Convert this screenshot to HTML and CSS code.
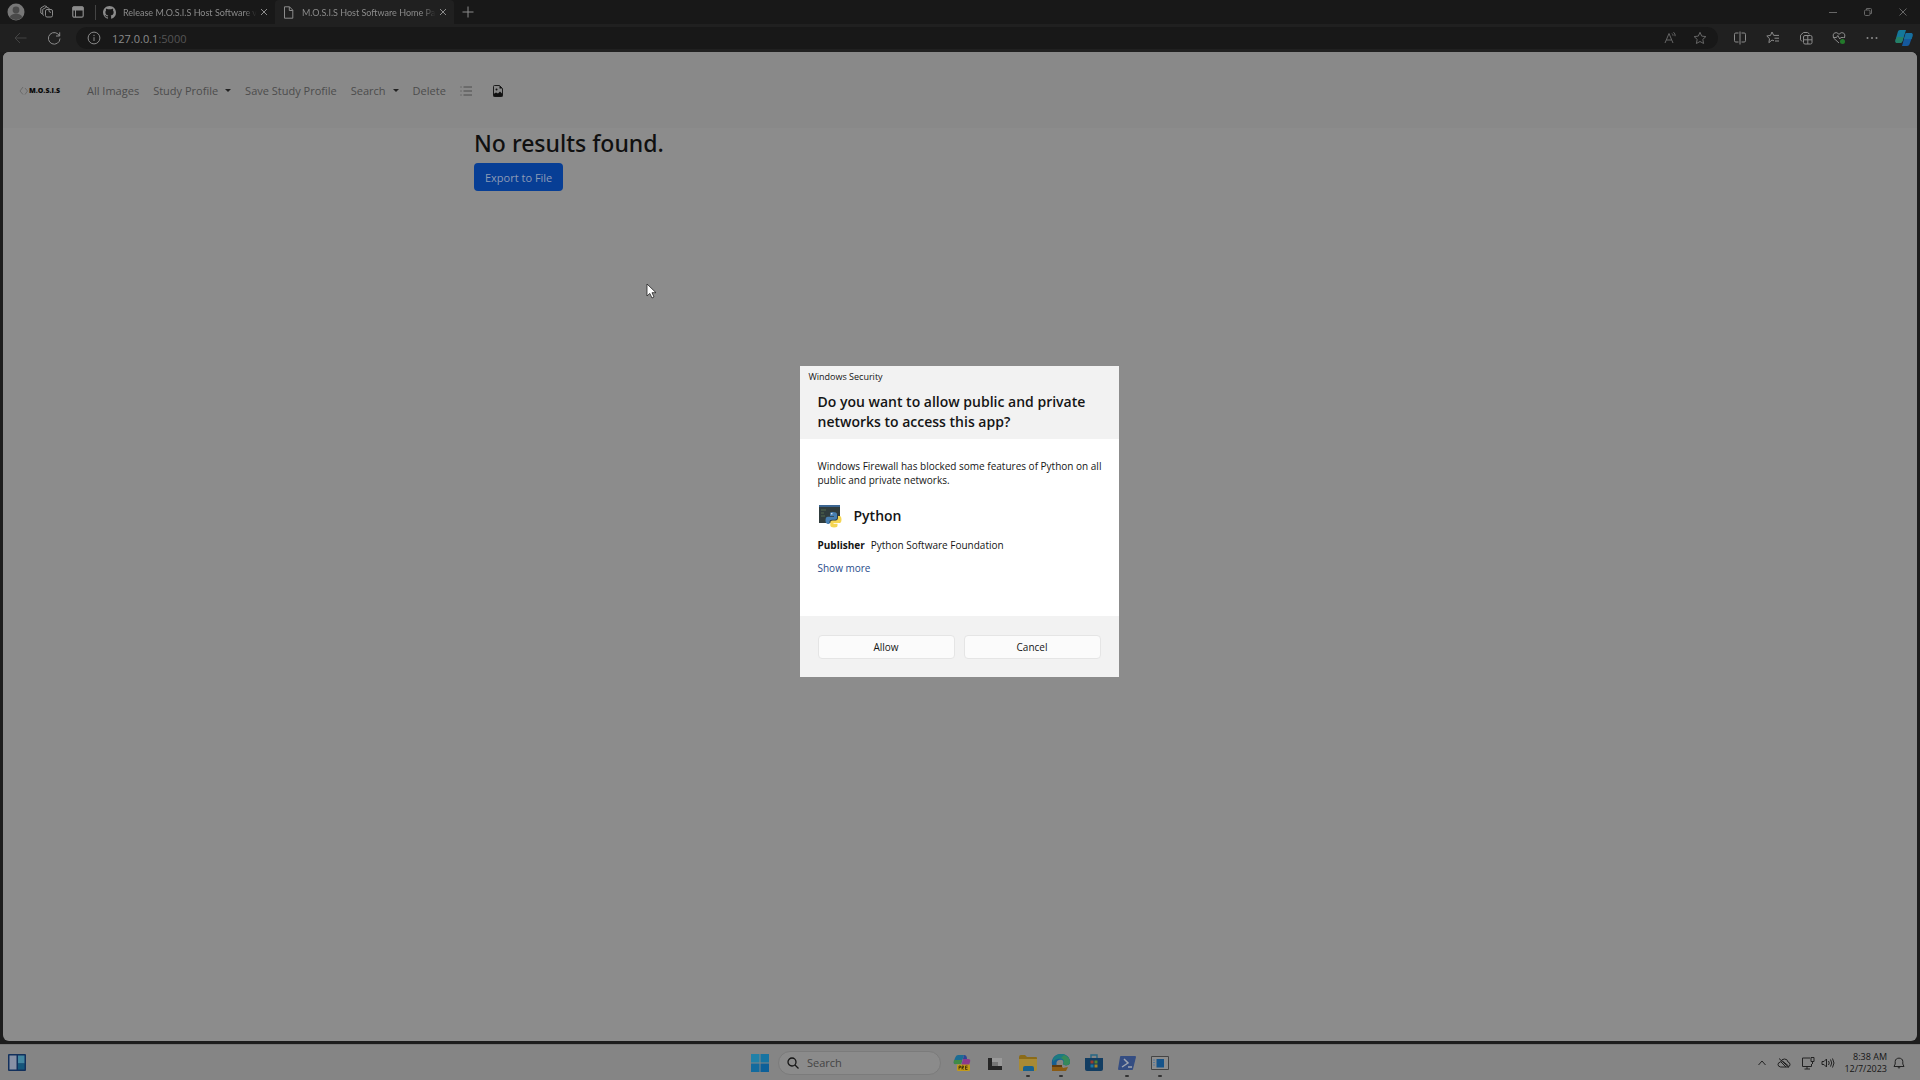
FILE: index.html
```html
<!DOCTYPE html>
<html lang="en">
<head>
<meta charset="utf-8">
<title>M.O.S.I.S Host Software Home Page</title>
<link rel="stylesheet" href="styles.css">
</head>
<body>
<div class="desktop">
  <section class="browser">
    <header class="tabstrip">
      <button class="icon-btn tab-tool" aria-label="Profile"><svg width="18" height="18" viewBox="0 0 18 18"><circle cx="9" cy="9" r="8.5" fill="#777"/><circle cx="9" cy="7" r="3.4" fill="#4a4a4a"/><path d="M3 14.5c0-5 12-5 12 0a8.500 8.500 0 0 1-12 0z" fill="#4a4a4a"/></svg></button>
      <button class="icon-btn tab-tool" aria-label="Workspaces"><svg class="line" width="14" height="14" viewBox="0 0 14 14"><rect x="5.500" y="4.500" width="7" height="7.500" rx="1.500"/><path d="M4 10.500 2.700 9.500V4.300L6.500 2.200l3 1.300M2.500 9 .8 8V3L4.500.8 7 1.600M9 4.500v2l2 1"/></svg></button>
      <button class="icon-btn tab-tool" aria-label="Tab actions"><svg width="12" height="12" viewBox="0 0 12 12"><rect x=".8" y=".8" width="10.400" height="10.400" rx="1.500" fill="none" stroke="#8b8b8b" stroke-width="1.200"/><path d="M1 1h10v3H1zM3.500 4v7" fill="#8b8b8b" stroke="#8b8b8b"/></svg></button>
      <span class="divider"></span>
      <div class="tab">
        <svg width="13" height="13" viewBox="0 0 16 16" fill="#8b8b8b"><path d="M8 0C3.580 0 0 3.580 0 8c0 3.540 2.290 6.530 5.470 7.590.4.070.55-.17.55-.38 0-.19-.01-.82-.01-1.490-2.010.37-2.530-.49-2.690-.94-.09-.23-.48-.94-.82-1.130-.28-.15-.68-.52-.01-.53.63-.01 1.080.58 1.230.82.72 1.210 1.870.87 2.330.66.070-.52.28-.87.51-1.070-1.780-.2-3.640-.89-3.640-3.950 0-.87.31-1.590.82-2.150-.08-.2-.36-1.020.08-2.120 0 0 .67-.21 2.200.82a7.600 7.600 0 0 1 4 0c1.530-1.040 2.200-.82 2.200-.82.44 1.100.16 1.920.08 2.120.51.56.82 1.270.82 2.150 0 3.070-1.870 3.750-3.650 3.950.29.25.54.73.54 1.480 0 1.070-.01 1.930-.01 2.200 0 .21.15.46.55.38A8 8 0 0 0 16 8c0-4.420-3.580-8-8-8z"/></svg>
        <a class="tab-title" href="#">Release M.O.S.I.S Host Software v</a>
        <button class="icon-btn close" aria-label="Close tab"><svg class="line" width="8" height="8" viewBox="0 0 8 8"><path d="m1 1 6 6M7 1 1 7"/></svg></button>
      </div>
      <div class="tab active">
        <svg class="line" width="13" height="13" viewBox="0 0 13 13"><path d="M2.500.8h5l3.300 3.400v8H2.500zM7.300.8v3.700h3.500"/></svg>
        <a class="tab-title" href="#">M.O.S.I.S Host Software Home Pa</a>
        <button class="icon-btn close" aria-label="Close tab"><svg class="line" width="8" height="8" viewBox="0 0 8 8"><path d="m1 1 6 6M7 1 1 7"/></svg></button>
      </div>
      <button class="icon-btn new-tab" aria-label="New tab"><svg class="line" width="12" height="12" viewBox="0 0 12 12"><path d="M6 .5v11M.5 6h11"/></svg></button>
      <div class="window-controls">
        <button class="icon-btn" aria-label="Minimize"><svg class="line dim" width="10" height="10" viewBox="0 0 10 10"><path d="M1 5.500h8"/></svg></button>
        <button class="icon-btn" aria-label="Restore"><svg class="line dim" width="10" height="10" viewBox="0 0 10 10"><rect x="1.500" y="3" width="5.500" height="5.500" rx="1.200"/><path d="M3.500 3V1.500h4a1 1 0 0 1 1 1v4H7"/></svg></button>
        <button class="icon-btn" aria-label="Close"><svg class="line dim" width="10" height="10" viewBox="0 0 10 10"><path d="m1.500 1.500 7 7m0-7-7 7"/></svg></button>
      </div>
    </header>
    <div class="toolbar">
      <button class="icon-btn" aria-label="Back"><svg class="line faint" width="13" height="12" viewBox="0 0 13 12"><path d="M12.500 6H1m5-5L1 6l5 5"/></svg></button>
      <button class="icon-btn" aria-label="Refresh"><svg class="line" width="14" height="14" viewBox="0 0 14 14"><path d="M12.500 5A5.800 5.800 0 1 0 13 7.500M12.700 1.300V5H9"/></svg></button>
      <div class="address">
        <svg class="line" width="14" height="14" viewBox="0 0 14 14"><circle cx="7" cy="7" r="5.900"/><path d="M7 6.200V10M7 3.800v1.300"/></svg>
        <a class="url" href="#"><b>127.0.0.1</b>:5000</a>
        <button class="icon-btn" aria-label="Read aloud"><svg class="line dim" width="14" height="14" viewBox="0 0 14 14"><path d="M2 12 6 2.500 10 12M3.300 9h5.400M9 2.500q1 .8 1 2.200M10.500 1.200q2 1.500 1.600 4"/></svg></button>
        <button class="icon-btn" aria-label="Favorite"><svg class="line dim" width="14" height="14" viewBox="0 0 14 14"><path d="m7 1.300 1.700 3.800 4.200.5-3.100 2.800.8 4.100L7 10.500l-3.600 2 .8-4.100L1.100 5.600l4.200-.5z"/></svg></button>
      </div>
      <div class="tools">
        <button class="icon-btn" aria-label="Split screen"><svg class="line" width="14" height="14" viewBox="0 0 14 14"><path d="M5.500 2H2.800Q1.500 2 1.500 3.300v6.400Q1.500 11 2.800 11h2.700M8.500 2h2.700q1.300 0 1.300 1.300v6.400q0 1.300-1.300 1.300H8.500M7 .5v13"/></svg></button>
        <button class="icon-btn" aria-label="Favorites list"><svg class="line" width="14" height="14" viewBox="0 0 14 14"><path d="M8 9.800 6 9l-3.100 2.700.6-4L.8 5l3.700-.6L6 1l1.700 3.400H13M8.500 7.200H13M9 10h4"/></svg></button>
        <button class="icon-btn" aria-label="Collections"><svg class="line" width="14" height="14" viewBox="0 0 14 14"><rect x="4.500" y="4.500" width="8.500" height="8.500" rx="1.500"/><path d="M8.800 5v8M4.500 8.800H13M3 10.500 1.500 8.800V4.200L4.500 1.500h4L10.500 3"/></svg></button>
        <button class="icon-btn" aria-label="Browser essentials"><svg class="line" width="14" height="14" viewBox="0 0 14 14"><path d="M7 12 1.500 7Q.3 3.300 2.500 1.900 5 .8 7 3.300q2-2.500 4.500-1.400 2.200 1.400 1 5.100M1.500 6.500h3l1.300-2 2 3.500 1-1.500h3"/><circle cx="10.500" cy="10.500" r="2.500" fill="#237a2b" stroke="none"/></svg></button>
        <button class="icon-btn" aria-label="More"><svg width="14" height="14" viewBox="0 0 14 14" fill="#8b8b8b"><circle cx="2.500" cy="7" r="1"/><circle cx="7" cy="7" r="1"/><circle cx="11.500" cy="7" r="1"/></svg></button>
        <button class="icon-btn" aria-label="Copilot"><svg width="18" height="18" viewBox="0 0 18 18"><path d="M5 1h6L7.500 12Q7 14 5 14H2Q0 14 .5 11L2.500 4Q3 1 5 1z" fill="#14789a"/><path d="M2 8 .5 11Q0 14 2 14h3q2 0 2.500-2l1-4z" fill="#258066"/><path d="M11 4h5q2 0 1.500 3L15 14q-.7 3-3 3H7l3-11q.3-2 1-2z" fill="#15589b"/><path d="M11 4h5q2 0 1.500 3l-.8 3H9z" fill="#176f9e"/></svg></button>
      </div>
    </div>
    <main class="page">
      <nav class="navbar">
        <a class="brand" href="#"><svg width="10" height="10" viewBox="0 0 10 10"><path d="M4 1 1 5l3 3.500M6 2l2.500 3L6 8.500" fill="none" stroke="#6b6b6b"/></svg>M.O.S.I.S</a>
        <a href="#">All Images</a>
        <a class="dropdown" href="#">Study Profile</a>
        <a href="#">Save Study Profile</a>
        <a class="dropdown" href="#">Search</a>
        <a href="#">Delete</a>
        <span class="nav-icons">
          <a href="#" aria-label="List view"><svg width="12" height="12" viewBox="0 0 12 12"><path d="M3.500 2H12M3.500 6H12M3.500 10H12M.5 2h1M.5 6h1M.5 10h1" stroke="#4c4c4c"/></svg></a>
          <a href="#" aria-label="Image file"><svg width="12" height="12" viewBox="0 0 12 12"><path d="M2.500.5h5l3 3v7q0 1-1 1h-7q-1 0-1-1v-9q0-1 1-1z" fill="#858585" stroke="#1c1c1c"/><path d="M7.500.5v3h3M1.500 9 4 7.500 6 8.500l2-2 2.500 2.500v2.500h-9z" fill="#111"/><circle cx="4.500" cy="4.500" r="1" fill="#111"/></svg></a>
        </span>
      </nav>
      <section class="results">
        <h1>No results found.</h1>
        <button class="export">Export to File</button>
      </section>
    </main>
  </section>
  <footer class="taskbar">
    <button class="icon-btn widgets" aria-label="Widgets"><svg width="18" height="17" viewBox="0 0 18 17"><rect width="18" height="17" rx="1" fill="#12305c"/><path d="M1.500 1.500h7v14h-7z" fill="#8790a5"/><path d="M10 1.500h6.500v8H10z" fill="#4286a0"/><path d="M10 9.500h6.500v6H10z" fill="#14567b"/></svg></button>
    <div class="apps">
      <button class="icon-btn" aria-label="Start"><svg width="18" height="18" viewBox="0 0 18 18" fill="#0d6099"><path d="M0 0h8.500v8.500H0z" fill="#2181a8"/><path d="M9.500 0H18v8.500H9.500z" fill="#1774a2"/><path d="M0 9.500h8.500V18H0z" fill="#136b9e"/><path d="M9.500 9.500H18V18H9.500z"/></svg></button>
      <label class="search"><svg width="12" height="12" viewBox="0 0 12 12" fill="none" stroke="#151515" stroke-width="1.300"><circle cx="5" cy="5" r="4"/><path d="m8 8 3.500 3.500"/></svg><input type="text" placeholder="Search" aria-label="Search"></label>
      <button class="icon-btn app" aria-label="Copilot"><svg width="18" height="18" viewBox="0 0 18 18"><path d="M5 1h6L8 10H2Q0 10 1 7l1-3Q3 1 5 1z" fill="#1b6c94"/><path d="M1 6h8l-1 4H3Q0 11 1 6z" fill="#3f8a48"/><path d="M10 5h5q3 0 2 3l-2 5H8z" fill="#8b3a8c"/><path d="M11 1q3 0 3 4h-4z" fill="#2b4698"/><rect x="4" y="10.500" width="13" height="6.500" rx="1" fill="#c29a1a"/><path d="M6 15.500v-3.500h1.500v1.500H6M9 15.500v-3.500h1.500v1.500H9l1.500 2M14.500 12h-2v3.500h2M12.500 13.700h2" stroke="#352a08" fill="none" stroke-width=".8"/></svg></button>
      <button class="icon-btn app" aria-label="Task view"><svg width="18" height="18" viewBox="0 0 18 18"><path d="M2 4h4v8h10v4H2z" fill="#262626"/><path d="M6 4h10v8H6z" fill="#999"/><path d="M6 8h6v4H6z" fill="#777"/></svg></button>
      <button class="icon-btn app running" aria-label="File Explorer"><svg width="20" height="18" viewBox="0 0 20 18"><path d="M1 3q0-2 2-2h4l2 2h9q1 0 1 1v5H1z" fill="#8b6b18"/><path d="M1 5h18v10q0 2-2 2H3q-2 0-2-2z" fill="#a88a35"/><path d="M5 17v-3q0-2 2-2h7q2 0 2 2v3z" fill="#17618f"/></svg></button>
      <button class="icon-btn app running" aria-label="Microsoft Edge"><svg width="20" height="20" viewBox="0 0 20 20"><path d="M1 12C0 5 4 1 10 1c5 0 9 3 9 8 0 4-5 4-7 2 2-3-1-5-4-4-4 1-3 7 1 9l-4 1Q2 16 1 12z" fill="#155e91"/><path d="M2 6C5-1 18-1 19 9c0 4-5 4-7 2 2-3-1-6-5-5Q4 6 2 9z" fill="#1c7b80"/><path d="M13 2q6 2 6 7c0 4-5 4-7 2 2-2 1-5-2-6z" fill="#36895a"/><path d="M1 12h9l2 3 5-1-2 4H1z" fill="#8b5b13"/><path d="M1 12h10v2H1z" fill="#5d3b10"/></svg></button>
      <button class="icon-btn app" aria-label="Microsoft Store"><svg width="20" height="18" viewBox="0 0 20 18"><path d="M7 4V1h6v3" fill="none" stroke="#266785" stroke-width="1.400"/><path d="M1 4h18v11q0 2-2 2H3q-2 0-2-2z" fill="#123d62"/><path d="M6.500 6.500h3v3h-3z" fill="#9a3c2b"/><path d="M10.500 6.500h3v3h-3z" fill="#59822c"/><path d="M6.500 10.500h3v3h-3z" fill="#1b76a0"/><path d="M10.500 10.500h3v3h-3z" fill="#a58325"/></svg></button>
      <button class="icon-btn app running" aria-label="PowerShell"><svg width="20" height="18" viewBox="0 0 20 18"><path d="M4 2h14q1 0 1 1l-3 12q0 1-1 1H2q-1 0-1-1L3 3q0-1 1-1z" fill="#344d82"/><path d="m7 5 4 4-6 4M11 13h4" stroke="#a0a5b0" stroke-width="1.500" fill="none"/></svg></button>
      <button class="icon-btn app running" aria-label="Host application"><svg width="20" height="18" viewBox="0 0 20 18"><path d="M1.500 2.500h17v13h-17z" fill="#8d8d8d" stroke="#444"/><path d="M6.500 5H14v8.500H6.500z" fill="#16548a"/><path d="M3 6h2M3 8.500h2M3 11h2" stroke="#54799c"/></svg></button>
    </div>
    <div class="tray">
      <button class="icon-btn" aria-label="Show hidden icons"><svg class="ink" width="10" height="10" viewBox="0 0 10 10"><path d="m1.500 7 3.500-4 3.500 4"/></svg></button>
      <button class="icon-btn" aria-label="OneDrive"><svg class="ink" width="14" height="12" viewBox="0 0 14 12"><path d="M3.500 10Q1 9.500 1 7.500T3.500 5Q4.500 2 7.500 2T11 5q2 .5 2 2.500T11 10zM2 1.500l10 9M4 5l5 5M5.500 4l6 5"/></svg></button>
      <button class="icon-btn" aria-label="Network"><svg class="ink" width="14" height="14" viewBox="0 0 14 14"><path d="M9 2H1.500v8.500h9V8M6 10.500V13M3.500 13h5.500M10 1.500h3v4h-3zM11.500 5.500V8"/></svg></button>
      <button class="icon-btn" aria-label="Volume"><svg class="ink" width="14" height="12" viewBox="0 0 14 12"><path d="M1 4.500h2L5.500 2v8L3 7.500H1zM7.500 4q1.500 2 0 4M9.500 2.500q2.500 3.500 0 7M11.500 1.500q3 4.500 0 9"/></svg></button>
      <time class="clock" datetime="2023-12-07T08:38">8:38 AM<br>12/7/2023</time>
      <button class="icon-btn" aria-label="Notifications"><svg class="ink" width="12" height="12" viewBox="0 0 12 12"><path d="M1 9.500h10L9.800 7V4.500C9.800 0 2.200 0 2.200 4.500V7zM4.800 10.500q1.200 1 2.400 0"/></svg></button>
    </div>
  </footer>

  <div class="overlay">
    <section class="dialog" role="dialog" aria-labelledby="dialog-title">
      <header class="dialog-head">
        <p class="dialog-source">Windows Security</p>
        <h2 id="dialog-title">Do you want to allow public and private<br>networks to access this app?</h2>
      </header>
      <div class="dialog-body">
        <p>Windows Firewall has blocked some features of Python on all<br>public and private networks.</p>
        <div class="program">
          <svg width="24" height="24" viewBox="0 0 24 24"><path d="M1 1h21v18H1z" fill="#303c3d"/><path d="M1 1h21v2H1z" fill="#3c6692"/><path d="M3 6h5M3 9h3M3 12h4" stroke="#536b4e"/><path d="M15 8c-3 0-3 1-3 2v2h4v.8h-6c-2 0-2.500 1.700-2.500 3.700S8.500 20 10 20h1.500v-2c0-1.500 1-2.300 2.300-2.300H17c1.300 0 2-.9 2-2V10c0-1.300-1.500-2-4-2z" fill="#477fb2"/><path d="M16 23.500c3 0 3.500-1 3.500-2v-1.800h-4V19h6c1.500 0 2-1.700 2-3.500S23 12 21.500 12H20v2c0 1.500-1 2.500-2.300 2.500h-3.200c-1.300 0-2.200.9-2.200 2v3c0 1.300 1.500 2 3.700 2z" fill="#f5d654"/><circle cx="13.800" cy="9.800" r=".7" fill="#fff"/></svg>
          <h3>Python</h3>
        </div>
        <dl><dt>Publisher</dt><dd>Python Software Foundation</dd></dl>
        <a class="more" href="#">Show more</a>
      </div>
      <footer class="dialog-actions"><button>Allow</button><button>Cancel</button></footer>
    </section>
  </div>
  <svg class="cursor" width="12" height="18" viewBox="0 0 12 18"><path d="M1 1v12l2.800-2.600L6 15l2-1-2-4.300h4z" fill="#fff" stroke="#222" stroke-width=".8"/></svg>
</div>
</body>
</html>
```
FILE: styles.css
```css
* { box-sizing: border-box; }
body { margin: 0; font-family: "Open Sans", "Noto Sans", sans-serif; font-size: 11px; color: #151515; }
h1, h2, h3, p, dl, dd { margin: 0; }
a { color: inherit; text-decoration: none; }
button, input { font: inherit; color: inherit; }
svg { display: block; flex: none; }

.desktop { position: relative; display: flex; flex-direction: column; min-height: 100vh; background: #1d1d1d; }
.icon-btn { display: flex; align-items: center; justify-content: center; padding: 0; border: 0; background: none; }
.line { fill: none; stroke: #8b8b8b; }
.dim { stroke: #666; }
.faint { stroke: #434343; }
.ink { fill: none; stroke: #222; }

.browser { flex: 1; display: flex; flex-direction: column; }
.tabstrip { display: flex; align-items: center; height: 24px; background: #181818; }
.tab-tool { width: 31px; }
.divider { width: 1px; height: 15px; margin-left: 2px; background: #444; }
.tab { display: flex; align-items: center; gap: 7px; width: 179px; height: 24px; padding: 0 5px 0 7px; font: 9px Lato, "Open Sans", sans-serif; color: #8b8b8b; }
.tab.active { border-radius: 4px 4px 0 0; background: #202020; }
.tab-title { flex: 1; min-width: 0; margin-right: -6px; white-space: nowrap; mask-image: linear-gradient(to right, #000 90%, transparent); }
.close { flex: none; width: 12px; }
.new-tab { width: 28px; }
.window-controls { display: flex; margin-left: auto; }
.window-controls .icon-btn { width: 35px; }

.toolbar { display: flex; align-items: center; height: 28px; background: #202020; }
.toolbar > .icon-btn { width: 33px; margin-left: 4px; }
.toolbar > .icon-btn + .icon-btn { margin-left: 0; }
.address { flex: 1; display: flex; align-items: center; gap: 16px; height: 22px; margin-left: 6px; padding: 0 11px; border-radius: 11px; background: #181818; }
.url { flex: 1; margin-left: -5px; color: #555; }
.url b { font-weight: 400; color: #8b8b8b; }
.tools { display: flex; margin-left: 5px; }
.tools .icon-btn { width: 33px; }
.tools .icon-btn:last-child { width: 32px; }

.page { flex: 1; margin: 0 3px 3px; border-radius: 6px; background: #8c8c8c; overflow: hidden; }
.navbar { display: flex; align-items: center; gap: 14px; height: 76px; padding: 1px 16px 0; background: #898989; color: #4c4c4c; }
.brand { display: flex; align-items: center; width: 54px; font: 800 7px "Open Sans", sans-serif; color: #080808; }
.dropdown::after { content: ""; display: inline-block; margin: 0 0 3px 7px; border: 3px solid transparent; border-top-color: #222; border-bottom: 0; }
.nav-icons { display: flex; gap: 20px; }
.results { padding-left: 471px; }
.results h1 { font: 500 23px/30px "Noto Sans", "Open Sans", sans-serif; color: #101010; }
.export { height: 28px; margin-top: 5px; padding: 0 11px; border: 0; border-radius: 4px; background: #073e95; color: #8c9bb5; }

.taskbar { display: grid; grid-template-columns: 1fr auto 1fr; align-items: center; height: 36px; background: #858585; border-top: 1px solid #777; }
.widgets { width: 33px; }
.apps { display: flex; align-items: center; padding-left: 7px; }
.search { display: flex; align-items: center; gap: 8px; width: 163px; height: 24px; margin: 0 4px 0 9px; padding: 0 8px; border: 1px solid #7b7b7b; border-radius: 12px; background: #8b8b8b; }
.search input { width: 100%; padding: 0; border: 0; outline: 0; background: none; }
.search input::placeholder { color: #444; opacity: 1; }
.app { position: relative; width: 33px; height: 34px; }
.running::after { content: ""; position: absolute; bottom: 3px; width: 4px; height: 2px; border-radius: 1px; background: #333; }
.tray { display: flex; align-items: center; justify-content: flex-end; gap: 6px; padding-right: 15px; }
.tray .icon-btn:nth-child(-n+2) { margin-right: 4px; }
.clock { width: 46px; font-size: 9px; line-height: 12px; text-align: right; }

.overlay { position: absolute; inset: 0; display: grid; place-items: center; padding: 0 2px 37px 0; }
.dialog { width: 319px; background: #fff; color: #151515; font-size: 10px; }
.dialog-head { height: 73px; padding: 5px 9px; background: #f2f2f2; }
.dialog-source { font-size: 9px; line-height: 12px; }
.dialog h2 { margin: 9px 0 0 9px; font-size: 14px; line-height: 20px; font-weight: 600; }
.dialog-body { height: 177px; padding: 20px 0 0 18px; line-height: 14px; white-space: nowrap; }
.program { display: flex; align-items: center; gap: 12px; margin-top: 17px; }
.program h3 { font-size: 14px; line-height: 24px; font-weight: 600; }
.dialog dl { display: flex; gap: 6px; margin-top: 10px; }
.dialog dt { font-weight: 700; }
.more { display: inline-block; margin-top: 9px; color: #294b8b; }
.dialog-actions { display: grid; grid-template-columns: 1fr 1fr; gap: 9px; height: 61px; padding: 19px 18px 18px; background: #f2f2f2; }
.dialog-actions button { padding: 0; border: 1px solid #e5e5e5; border-radius: 4px; background: #fbfbfb; }
.cursor { position: absolute; left: 646px; top: 283px; }
```
